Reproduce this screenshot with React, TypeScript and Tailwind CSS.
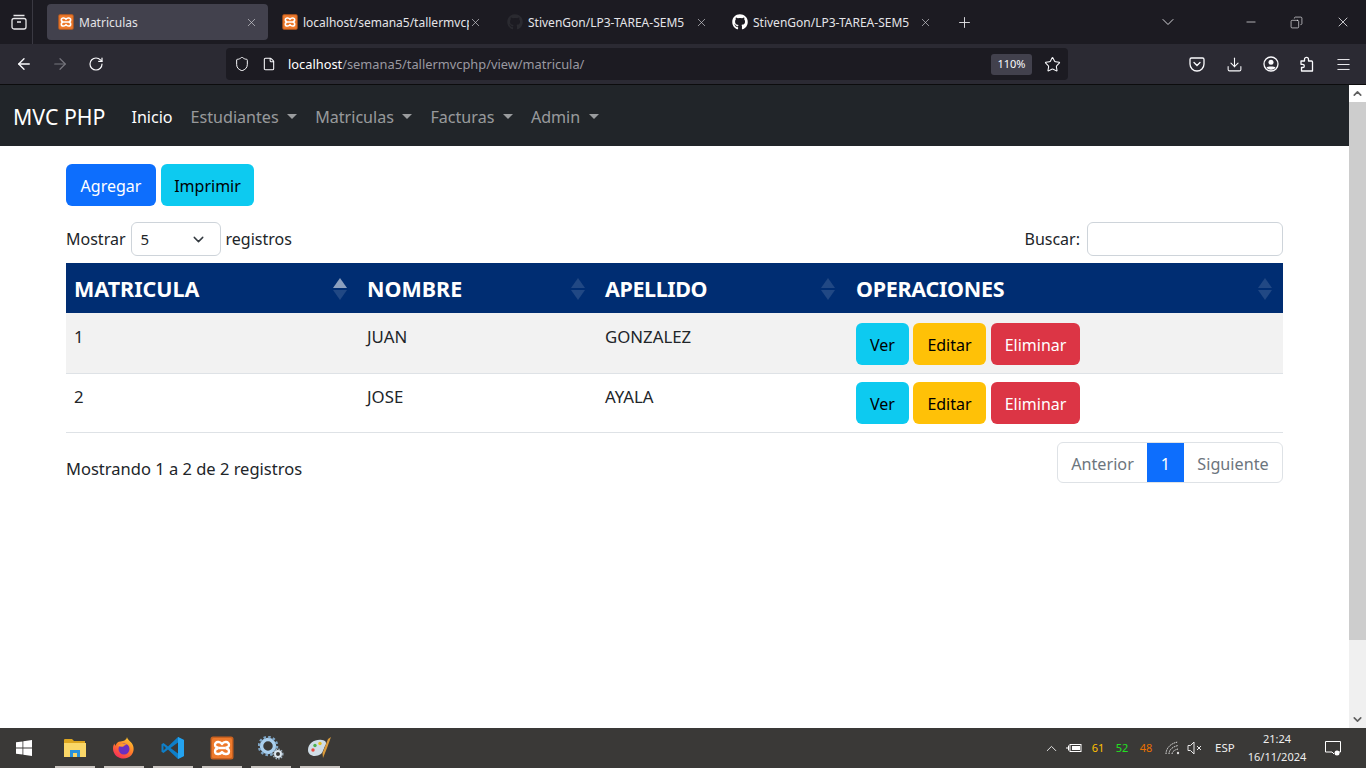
import React from 'react';
import { FaGithub } from 'react-icons/fa';
import { ArrowLeft, ArrowRight, ChevronDown, ChevronUp, Copy, Download, Menu, Minus, Plus, RotateCw, Shield, Star, X, File } from 'lucide-react';

const XamppIcon: React.FC<{ size: number }> = ({ size }) => (
  <svg width={size} height={size} viewBox="0 0 24 24">
    <rect x="0.5" y="0.5" width="23" height="23" rx="2.500" fill="#c9611f" />
    <rect x="2" y="2" width="20" height="20" rx="1.500" fill="#ee7a2c" />
    <path d="M12 8C11 6.500 10 6 8.500 6H7.800A2.800 2.800 0 0 0 5 8.800 2.800 2.800 0 0 0 7.800 11.500v1A2.800 2.800 0 0 0 5 15.200 2.800 2.800 0 0 0 7.800 18H8.500C10 18 11 17.500 12 16 13 17.500 14 18 15.500 18H16.200A2.800 2.800 0 0 0 19 15.200 2.800 2.800 0 0 0 16.200 12.500v-1A2.800 2.800 0 0 0 19 8.800 2.800 2.800 0 0 0 16.200 6H15.500C14 6 13 6.500 12 8zM9 12H15" fill="none" stroke="#fff" strokeWidth="2.300" strokeLinejoin="round" />
  </svg>
);

const Tab: React.FC<{ title: string; icon: React.ReactNode; active?: boolean; className: string }> = ({ title, icon, active, className }) => (
  <div className={`h-9 rounded-[4px] flex items-center shrink-0 ${className} ${active ? 'bg-[#42414d]' : ''}`}>
    <div className="w-4 h-4 shrink-0 flex items-center justify-center">{icon}</div>
    <span className="ml-[5px] pt-[1px] flex-1 min-w-0 overflow-hidden whitespace-nowrap text-[12px] text-[#e4e4e8] [font-family:'Noto_Sans',sans-serif]">{title}</span>
    <X size={13} strokeWidth={1.200} className="text-[#d4d4d9] shrink-0" />
  </div>
);

const Caret = () => <span className="ml-[8.500px] inline-block w-0 h-0 border-x-[5px] border-x-transparent border-t-[5px] border-t-current" />;

const NavItem: React.FC<{ label: string; caret?: boolean; active?: boolean }> = ({ label, caret, active }) => (
  <div className={`flex items-center px-[9px] text-[16.100px] pt-[3px] ${active ? 'text-white' : 'text-[#ffffff8c]'}`}>
    {label}
    {caret && <Caret />}
  </div>
);

const Btn: React.FC<{ label: string; className: string }> = ({ label, className }) => (
  <div className={`h-[42px] rounded-[6px] flex items-center justify-center text-[16px] shrink-0 ${className}`}>{label}</div>
);

const SortIcon: React.FC<{ active?: boolean }> = ({ active }) => (
  <svg width="14" height="22" viewBox="0 0 14 22" className="shrink-0">
    <path d="M7 0 14 10H0z" fill="#fff" opacity={active ? 0.55 : 0.13} />
    <path d="M7 22 0 12h14z" fill="#fff" opacity={0.13} />
  </svg>
);

const TaskIcon: React.FC<{ children: React.ReactNode }> = ({ children }) => (
  <div className="relative w-[40px] h-10 mr-[9px] flex items-center justify-center shrink-0">
    {children}
    <div className="absolute bottom-0 left-0 right-0 h-[2px] bg-[#c8c4c0]" />
  </div>
);

const rows = [
  { id: '1', name: 'JUAN', last: 'GONZALEZ', bg: 'bg-[#f2f2f2]', h: 'h-[60px]', textPad: 'pt-[11px]', btnPad: 'pt-[2px]' },
  { id: '2', name: 'JOSE', last: 'AYALA', bg: 'bg-white', h: 'h-[59px]', textPad: 'pt-[10px]', btnPad: '' },
];

export default function App() {
  return (
    <div className="h-screen w-full overflow-hidden flex flex-col bg-white text-[#212529] [font-family:'Noto_Sans','Open_Sans',sans-serif]">
      {/* tab strip */}
      <div className="h-11 bg-[#1c1b22] flex items-center shrink-0 text-[#fbfbfe]">
        <div className="w-[33px] h-full flex items-center justify-center border-r border-[#3a3942] shrink-0 pl-[6px]">
          <svg width="16" height="16" viewBox="0 0 16 16" fill="none" stroke="#e8e8ea" strokeWidth="1.300" className="shrink-0">
            <rect x="1" y="4.500" width="14" height="10.500" rx="2" />
            <path d="M2.500 1.500h11M6 8h4" />
          </svg>
        </div>
        <div className="w-[14px] shrink-0" />
        <Tab active className="w-[221px] pl-[11px] pr-[10.500px]" title="Matriculas" icon={<XamppIcon size={16} />} />
        <div className="w-[4px] shrink-0" />
        <Tab className="w-[224px] pl-[10px] pr-[14.500px]" title="localhost/semana5/tallermvcphp" icon={<XamppIcon size={16} />} />
        <Tab className="w-[225px] pl-[11px] pr-[13.500px]" title="StivenGon/LP3-TAREA-SEM5" icon={<FaGithub size={16} className="text-[#2a2a30]" />} />
        <Tab className="w-[224px] pl-[11px] pr-[13.500px]" title="StivenGon/LP3-TAREA-SEM5" icon={<FaGithub size={16} className="text-white" />} />
        <Plus size={17} strokeWidth={1.300} className="ml-[11px] text-[#e4e4e8] shrink-0" />
        <div className="flex-1" />
        <ChevronDown size={20} strokeWidth={1.200} className="text-[#d4d4d8] mr-[66px]" />
        <Minus size={14} strokeWidth={1.200} className="text-[#f0f0f2] mr-[32px]" />
        <Copy size={13} strokeWidth={1.200} className="text-[#f0f0f2] mr-[32px] -scale-x-100" />
        <X size={16} strokeWidth={1.200} className="text-[#f0f0f2] mr-[15px]" />
      </div>

      {/* toolbar */}
      <div className="h-[41px] bg-[#2b2a33] border-b border-[#0c0c0d] flex items-center shrink-0 text-[#fbfbfe] pl-[15px]">
        <ArrowLeft size={18} strokeWidth={1.800} className="shrink-0" />
        <ArrowRight size={18} strokeWidth={1.600} className="ml-[18px] text-[#77767e] shrink-0" />
        <RotateCw size={16} strokeWidth={1.800} className="ml-[19px] shrink-0" />
        <div className="ml-[122px] w-[842px] h-8 rounded-[4px] bg-[#1c1b22] flex items-center pl-[8px] pr-[8px] shrink-0">
          <Shield size={16} strokeWidth={1.500} className="shrink-0" />
          <File size={14} strokeWidth={1.800} className="ml-[12px] shrink-0" />
          <span className="ml-[12px] pt-[1px] text-[12.830px] text-white">localhost<span className="text-[#9a99a1]">/semana5/tallermvcphp/view/matricula/</span></span>
          <div className="flex-1" />
          <div className="w-[41px] h-[21px] rounded-[3px] bg-[#42414d] text-[11px] flex items-center justify-center">110%</div>
          <Star size={17} strokeWidth={1.500} className="ml-[12px] mr-[-1px] shrink-0" />
        </div>
        <svg width="16" height="16" viewBox="0 0 16 16" fill="none" stroke="#fbfbfe" strokeWidth="1.300" className="ml-[121px] shrink-0">
          <path d="M2.500 2h11A1.500 1.500 0 0 1 15 3.500V8a7 7 0 0 1-14 0V3.500A1.500 1.500 0 0 1 2.500 2z" />
          <path d="m5 6.500 3 3 3-3" strokeLinecap="round" />
        </svg>
        <Download size={17} strokeWidth={1.500} className="ml-[21px] shrink-0" />
        <svg width="16" height="16" viewBox="0 0 16 16" fill="none" className="ml-[20px] shrink-0">
          <circle cx="8" cy="8" r="7" stroke="#fbfbfe" strokeWidth="1.300" />
          <circle cx="8" cy="6.300" r="2.500" fill="#fbfbfe" />
          <path d="M3.500 11.500c1-1.300 8-1.300 9 0-1 1.500-2.500 2.200-4.500 2.200s-3.500-.7-4.500-2.200z" fill="#fbfbfe" />
        </svg>
        <svg width="16" height="16" viewBox="0 0 16 16" fill="none" stroke="#fbfbfe" strokeWidth="1.300" className="ml-[20px] shrink-0">
          <path d="M2.500 15V11.500h1.200a1.600 1.600 0 0 0 0-3.200H2V5h3.500V3.300a2 2 0 0 1 4 0V5h3a1 1 0 0 1 1 1v9z" strokeLinejoin="round" />
        </svg>
        <Menu size={17} strokeWidth={1.300} className="ml-[20px] shrink-0" />
      </div>

      {/* page + scrollbar */}
      <div className="flex-1 flex min-h-0">
        <div className="flex-1 min-w-0">
          <div className="h-[61px] bg-[#212529] flex items-center pl-[13px]">
            <span className="text-[21.300px] pt-[2px] text-white mr-[17px]">MVC PHP</span>
            <NavItem label="Inicio" active />
            <NavItem label="Estudiantes" caret />
            <NavItem label="Matriculas" caret />
            <NavItem label="Facturas" caret />
            <NavItem label="Admin" caret />
          </div>

          <div className="w-[1217px] ml-[66px] pt-[18px]">
            <div className="flex gap-[5px]">
              <Btn label="Agregar" className="w-[90px] pt-[1px] bg-[#0d6efd] text-white" />
              <Btn label="Imprimir" className="w-[93px] pt-[1px] bg-[#0dcaf0] text-black" />
            </div>

            <div className="flex items-center justify-between mt-[15px] h-[36px] text-[16px]">
              <div className="flex items-center">
                Mostrar
                <div className="mx-[5px] w-[90px] h-[34px] rounded-[6px] border border-[#ced4da] flex items-center justify-between pl-[9px] pr-[13px] text-[15px]">
                  5
                  <ChevronDown size={17} strokeWidth={2} className="text-[#343a40]" />
                </div>
                registros
              </div>
              <div className="flex items-center">
                Buscar:
                <div className="ml-[7px] w-[196px] h-[34px] rounded-[6px] border border-[#ced4da]" />
              </div>
            </div>

            <table className="mt-[6px] w-full border-collapse table-fixed">
              <thead>
                <tr className="h-[50px] bg-[#002d72] text-white text-left text-[21.500px] font-bold">
                  <th className="w-[292px] pl-[8px] pt-[2px]"><div className="flex items-center justify-between pr-[11px]">MATRICULA<SortIcon active /></div></th>
                  <th className="w-[238px] pl-[9px] pt-[2px]"><div className="flex items-center justify-between pr-[11px]">NOMBRE<SortIcon /></div></th>
                  <th className="w-[251px] pl-[9px] pt-[2px]"><div className="flex items-center justify-between pr-[12px] tracking-[-0.4px]">APELLIDO<SortIcon /></div></th>
                  <th className="pl-[9px] pt-[2px]"><div className="flex items-center justify-between pr-[11px] tracking-[-0.3px]">OPERACIONES<SortIcon /></div></th>
                </tr>
              </thead>
              <tbody>
                {rows.map((row) => (
                  <tr key={row.id} className={`${row.bg} ${row.h} border-b border-[#dee2e6] text-[16.800px] text-[#212529]`}>
                    <td className={`pl-[8px] align-top ${row.textPad}`}>{row.id}</td>
                    <td className={`pl-[9px] align-top ${row.textPad}`}>{row.name}</td>
                    <td className={`pl-[9px] align-top ${row.textPad}`}>{row.last}</td>
                    <td className={`pl-[9px] ${row.btnPad}`}>
                      <div className="flex gap-[4px]">
                        <Btn label="Ver" className="w-[53px] pt-[3px] bg-[#0dcaf0] text-black" />
                        <Btn label="Editar" className="w-[73px] pt-[3px] bg-[#ffc107] text-black" />
                        <Btn label="Eliminar" className="w-[89px] pt-[3px] ml-[1px] bg-[#dc3545] text-white" />
                      </div>
                    </td>
                  </tr>
                ))}
              </tbody>
            </table>

            <div className="flex justify-between mt-[9px]">
              <span className="text-[16.500px] mt-[15px]">Mostrando 1 a 2 de 2 registros</span>
              <div className="flex h-[41px] rounded-[6px] border border-[#dee2e6] text-[16.200px] text-[#6c757d] overflow-hidden">
                <div className="w-[89px] pt-[4px] flex items-center justify-center">Anterior</div>
                <div className="w-[37px] pt-[4px] bg-[#0d6efd] text-white flex items-center justify-center">1</div>
                <div className="w-[98px] pt-[4px] flex items-center justify-center">Siguiente</div>
              </div>
            </div>
          </div>
        </div>

        <div className="w-[17px] shrink-0 bg-[#f0f0f0] flex flex-col">
          <div className="h-[17px] bg-white flex items-center justify-center"><ChevronUp size={13} strokeWidth={3} className="text-[#606060]" /></div>
          <div className="h-[538px] bg-[#cdcdcd]" />
          <div className="flex-1" />
          <div className="h-[17px] flex items-center justify-center"><ChevronDown size={13} strokeWidth={3} className="text-[#606060]" /></div>
        </div>
      </div>

      {/* taskbar */}
      <div className="h-10 bg-[#3a3937] flex items-center shrink-0 text-white">
        <svg width="16" height="16" viewBox="0 0 16 16" fill="#fff" className="ml-[16px] mr-[23px] shrink-0">
          <path d="M0 2.300 6.500 1.400V7.600H0zM7.300 1.300 16 0V7.600H7.300zM0 8.400H6.500V14.600L0 13.700zM7.300 8.400H16V16L7.300 14.700z" />
        </svg>
        <TaskIcon>
          <svg width="22" height="20" viewBox="0 0 22 20">
            <path d="M0 2a1 1 0 0 1 1-1h7l2 2h11v3H0z" fill="#dda61f" />
            <rect y="5" width="22" height="14" fill="#fad768" />
            <path d="M6 19v-7h10v7h-3v-4H9v4z" fill="#2a93dd" />
          </svg>
        </TaskIcon>
        <TaskIcon>
          <svg width="24" height="24" viewBox="0 0 24 24">
            <defs>
              <linearGradient id="ffg" x1="0.800" y1="0" x2="0.200" y2="1">
                <stop offset="0" stopColor="#ffd02e" />
                <stop offset="0.500" stopColor="#ff7a2a" />
                <stop offset="1" stopColor="#f5245f" />
              </linearGradient>
            </defs>
            <path d="M15 1c.5 3 3 3.500 5 6.500 2.500 4 2 8.500-.5 11.500S12.500 23.500 8 22 1 16.500 1 12.500c0-2 .6-3.800 1.500-5 0 1 .4 1.800 1 2.300C4 7.500 6 5.500 8.500 5.500 12 5 14.500 4 15 1z" fill="url(#ffg)" />
            <circle cx="12" cy="13" r="5.500" fill="#6b2fc0" />
            <path d="M6 10c2-2.500 6-3 9-1-2 0-3 .500-3.500 1.500-2 .500-3.500 0-5.500-.5z" fill="#ff9a2e" />
          </svg>
        </TaskIcon>
        <TaskIcon>
          <svg width="24" height="24" viewBox="0 0 24 24">
            <path d="M17 1 23 4V20L17 23 7 13.500 2.500 17 .5 15.800V8.200L2.500 7 7 10.500z" fill="#0e7fc8" />
            <path d="M17 1 23 4V20L17 23V1z" fill="#24a3ef" />
            <path d="M17 6.500v11L9.500 12z" fill="#3a3937" />
            <path d="M2.500 9.500 5 12l-2.500 2.500z" fill="#3a3937" />
          </svg>
        </TaskIcon>
        <TaskIcon><XamppIcon size={24} /></TaskIcon>
        <TaskIcon>
          <svg width="26" height="24" viewBox="0 0 26 24" fill="none">
            <circle cx="10" cy="10" r="6.500" stroke="#a9cfee" strokeWidth="3.500" />
            <circle cx="10" cy="10" r="9" stroke="#7fa6c6" strokeWidth="2.500" strokeDasharray="2.500 2.200" />
            <circle cx="20" cy="18" r="3" stroke="#dbe7f0" strokeWidth="2" />
            <circle cx="20" cy="18" r="4.800" stroke="#9fb3c2" strokeWidth="1.500" strokeDasharray="1.500 1.300" />
          </svg>
        </TaskIcon>
        <TaskIcon>
          <svg width="26" height="24" viewBox="0 0 26 24">
            <path d="M1 14C1 7 8 3 15 4c4 .6 5 3 3 6-2 4-2 8-7 9.500C6 21 1 19 1 14z" fill="#cfdde6" />
            <circle cx="6" cy="14" r="1.700" fill="#e8483c" />
            <circle cx="8" cy="9.500" r="1.700" fill="#4cb04c" />
            <circle cx="13" cy="7.500" r="1.700" fill="#e6c020" />
            <path d="M24 1 20 12l-4 10-.5-5L21 3z" fill="#d99a3a" />
          </svg>
        </TaskIcon>
        <div className="flex-1" />
        <ChevronUp size={17} strokeWidth={1.300} className="text-[#f0f0f0] mr-[6px] shrink-0" />
        <svg width="16" height="12" viewBox="0 0 16 12" fill="none" stroke="#fff" className="mr-[4px] shrink-0">
          <rect x="4" y="2.500" width="11" height="7" />
          <rect x="6" y="4" width="8" height="4" fill="#fff" stroke="none" />
          <path d="M0 6h3M2.500 3.500v5" />
        </svg>
        <span className="text-[11px] text-[#ffc000] w-[24px] text-center">61</span>
        <span className="text-[11px] text-[#22e022] w-[24px] text-center">52</span>
        <span className="text-[11px] text-[#e87000] w-[24px] text-center">48</span>
        <svg width="16" height="14" viewBox="0 0 16 14" fill="none" stroke="#ddd" className="ml-[7px] shrink-0">
          <path d="M1 13C1 7 6 2 13 1M4 13c0-4 3-7 9-8.500M7 13c0-2 2-4 6-5" strokeDasharray="1.500 .800" />
          <circle cx="13" cy="12" r="1.200" fill="#ddd" stroke="none" />
        </svg>
        <svg width="16" height="14" viewBox="0 0 16 14" fill="none" stroke="#e8e8e8" className="ml-[6px] shrink-0">
          <path d="M1 4.500h2.500L7 1v12L3.500 9.500H1zM10 5l4 4M14 5l-4 4" />
        </svg>
        <span className="text-[11.500px] ml-[12px] w-[20px] text-[#eeeeee]">ESP</span>
        <div className="ml-[11px] w-[62px] flex flex-col items-center leading-[18px] text-[11px] text-[#eeeeee]">
          <span>21:24</span>
          <span>16/11/2024</span>
        </div>
        <svg width="18" height="17" viewBox="0 0 18 17" fill="none" className="ml-[16px] mr-[24px] shrink-0">
          <path d="M1.500 1.500h15v10.500h-3.500M8 12H1.500V1.500M8 12l2 2" stroke="#fff" />
          <circle cx="13" cy="13" r="2.500" fill="#fff" />
        </svg>
      </div>
    </div>
  );
}
